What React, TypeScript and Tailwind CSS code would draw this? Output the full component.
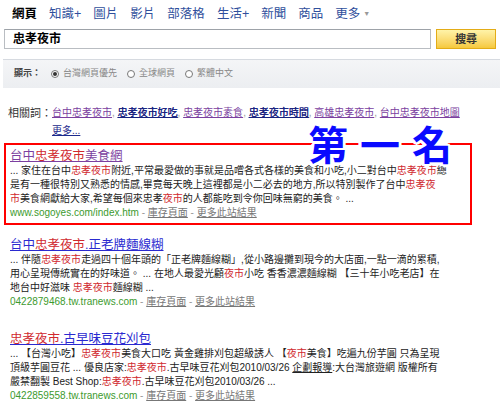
import React from "react";

/* ---------------------------------- DATA ---------------------------------- */
type Seg = { t: string; hot?: boolean; u?: boolean };

const tabs = ["知識+", "圖片", "影片", "部落格", "生活+", "新聞", "商品"];

const related: { t: string; visited: boolean }[] = [
  { t: "台中忠孝夜市", visited: true },
  { t: "忠孝夜市好吃", visited: false },
  { t: "忠孝夜市素食", visited: true },
  { t: "忠孝夜市時間", visited: false },
  { t: "高雄忠孝夜市", visited: true },
  { t: "台中忠孝夜市地圖", visited: true },
];

const results: {
  title: Seg[];
  visited: boolean;
  lines: Seg[][];
  url: string;
}[] = [
  {
    visited: true,
    title: [{ t: "台中" }, { t: "忠孝夜市", hot: true }, { t: "美食網" }],
    lines: [
      [
        { t: "... 家住在台中" },
        { t: "忠孝夜市", hot: true },
        { t: "附近,平常最愛做的事就是品嚐各式各樣的美食和小吃,小二對台中" },
        { t: "忠孝夜市", hot: true },
        { t: "總" },
      ],
      [
        { t: "是有一種很特別又熟悉的情感,畢竟每天晚上這裡都是小二必去的地方,所以特別製作了台中" },
        { t: "忠孝夜", hot: true },
      ],
      [
        { t: "市", hot: true },
        { t: "美食網獻給大家,希望每個來忠孝" },
        { t: "夜市", hot: true },
        { t: "的人都能吃到令你回味無窮的美食。 ..." },
      ],
    ],
    url: "www.sogoyes.com/index.htm",
  },
  {
    visited: false,
    title: [{ t: "台中" }, { t: "忠孝夜市", hot: true }, { t: ".正老牌麵線糊" }],
    lines: [
      [
        { t: "... 伴隨" },
        { t: "忠孝夜市", hot: true },
        { t: "走過四十個年頭的「正老牌麵線糊」,從小路邊攤到現今的大店面,一點一滴的累積," },
      ],
      [
        { t: "用心呈現傳統實在的好味道。 ... 在地人最愛光顧" },
        { t: "夜市", hot: true },
        { t: "小吃 香香濃濃麵線糊 【三十年小吃老店】在" },
      ],
      [
        { t: "地台中好滋味 " },
        { t: "忠孝夜市", hot: true },
        { t: "麵線糊 ..." },
      ],
    ],
    url: "0422879468.tw.tranews.com",
  },
  {
    visited: false,
    title: [{ t: "忠孝夜市", hot: true }, { t: ".古早味豆花刈包" }],
    lines: [
      [
        { t: "... 【台灣小吃】" },
        { t: "忠孝夜市", hot: true },
        { t: "美食大口吃 黃金雞排刈包超級誘人 【" },
        { t: "夜市", hot: true },
        { t: "美食】吃遍九份芋圓 只為呈現" },
      ],
      [
        { t: "頂級芋圓豆花 ... 優良店家:" },
        { t: "忠孝夜市", hot: true },
        { t: ".古早味豆花刈包2010/03/26 " },
        { t: "企劃報導", u: true },
        { t: ":大台灣旅遊網 版權所有" },
      ],
      [
        { t: "嚴禁翻製 Best Shop:" },
        { t: "忠孝夜市", hot: true },
        { t: ".古早味豆花刈包2010/03/26 ..." },
      ],
    ],
    url: "0422859558.tw.tranews.com",
  },
];

/* --------------------------------- PAGE ----------------------------------- */
export default function App() {
  return (
    <main className="w-[500px] h-[412px] overflow-hidden bg-white text-[#222] font-['Liberation_Sans','Noto_Sans_CJK_TC',sans-serif]">
      {/* TABS */}
      <nav className="flex h-[29px] items-center gap-[12px] pl-[12px] text-[12.5px]">
        <span className="font-bold text-black">網頁</span>
        {tabs.map((t) => (
          <a key={t} href="#" className="text-[#2f4f9c]">
            {t}
          </a>
        ))}
        <a href="#" className="flex items-center gap-[3px] text-[#2f4f9c]">
          更多
          <span className="text-[7px] text-[#999]">▼</span>
        </a>
      </nav>

      {/* SEARCH */}
      <div className="flex h-[20px] gap-[5px] px-[4px]">
        <div className="flex w-[429px] items-center border border-[#b9bdc2] border-t-[#9da2a8] pl-[8px] text-[12px] font-bold text-black">
          忠孝夜市
        </div>
        <button className="flex w-[60px] items-center justify-center border border-[#e3ac17] bg-gradient-to-b from-[#fff3a8] to-[#f6c93a] text-[11px] font-bold text-[#333]">
          搜尋
        </button>
      </div>

      {/* FILTER BAND */}
      <div className="mt-[10px] ml-[3px] flex h-[29px] items-center border-t border-[#d6dae0] bg-gradient-to-b from-[#f4f5f7] to-[#eceef1] pl-[11px] text-[9px] text-[#888]">
        <span className="mr-[10px] font-bold text-[#444]">顯示：</span>
        <Radio on label="台灣網頁優先" />
        <Radio label="全球網頁" />
        <Radio label="繁體中文" />
      </div>

      {/* RELATED */}
      <div className="mt-[16px] pl-[8px] text-[10px] leading-[18px]">
        <div className="flex">
          <span className="text-[11px] text-[#333]">相關詞：</span>
          <span>
            {related.map((r, i) => (
              <React.Fragment key={r.t}>
                <a
                  href="#"
                  className={
                    r.visited
                      ? "text-[#7b3fa0] underline"
                      : "text-[#16217f] underline [text-shadow:0.3px_0_#16217f]"
                  }
                >
                  {r.t}
                </a>
                {i < related.length - 1 && <span className="text-[#999]">, </span>}
              </React.Fragment>
            ))}
          </span>
        </div>
        <a href="#" className="ml-[44px] text-[#1c2a8c] underline">
          更多...
        </a>
      </div>

      {/* RESULT 1 (highlighted) */}
      <section className="relative mt-[3px] ml-[4px] w-[468px] border-2 border-[#ff0000] pt-[3px] pb-[3px] pl-[4px]">
        <Result r={results[0]} />
        <div className="absolute -top-[22px] left-[302px] whitespace-nowrap text-[40px] font-bold leading-none tracking-[12px] text-[#0a0aff] font-['Noto_Sans_CJK_TC',sans-serif] [text-shadow:3px_0_#fff,-3px_0_#fff,0_3px_#fff,0_-3px_#fff,2px_2px_#fff,-2px_-2px_#fff,2px_-2px_#fff,-2px_2px_#fff]">
          第一名
        </div>
      </section>

      {/* OTHER RESULTS */}
      <section className="mt-[12px] pl-[10px]">
        <Result r={results[1]} />
      </section>
      <section className="mt-[22px] pl-[10px]">
        <Result r={results[2]} />
      </section>
    </main>
  );
}

/* ------------------------------- PARTS ------------------------------------ */
function Radio({ label, on }: { label: string; on?: boolean }) {
  return (
    <span className="mr-[10px] flex items-center gap-[4px]">
      <span className="flex size-[8px] items-center justify-center rounded-full border border-[#777] bg-white">
        {on && <span className="size-[4px] rounded-full bg-[#333]" />}
      </span>
      {label}
    </span>
  );
}

function Result({ r }: { r: (typeof results)[number] }) {
  const base = r.visited ? "text-[#7b3fa0]" : "text-[#2a2ad0]";
  return (
    <div>
      <a href="#" className={`block text-[12.5px] leading-[16px] underline ${base}`}>
        {r.title.map((s, i) => (
          <span key={i} className={s.hot ? "text-[#d0282e]" : ""}>
            {s.t}
          </span>
        ))}
      </a>
      <div className="text-[10px] leading-[14px] text-[#222]">
        {r.lines.map((line, i) => (
          <div key={i} className="whitespace-nowrap">
            {line.map((s, j) => (
              <span
                key={j}
                className={s.hot ? "text-[#d0282e]" : s.u ? "underline" : ""}
              >
                {s.t}
              </span>
            ))}
          </div>
        ))}
        <div className="whitespace-nowrap">
          <span className="text-[#3c9a2e]">{r.url}</span>
          <span className="text-[#999]"> - </span>
          <a href="#" className="text-[#777] underline">
            庫存頁面
          </a>
          <span className="text-[#999]"> - </span>
          <a href="#" className="text-[#777] underline">
            更多此站結果
          </a>
        </div>
      </div>
    </div>
  );
}
